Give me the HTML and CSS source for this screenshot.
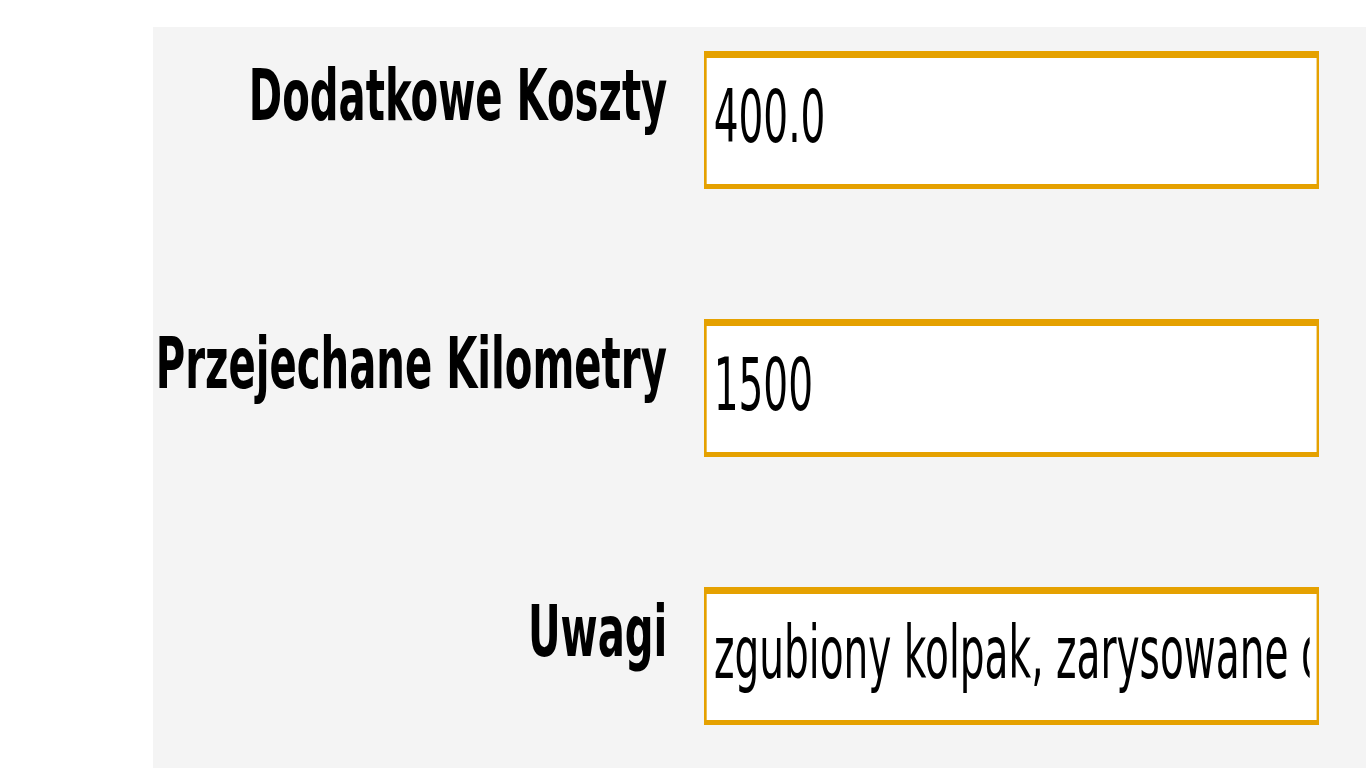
FILE: index.html
```html
<!DOCTYPE html>
<html lang="pl">
<head>
<meta charset="utf-8">
<title>Formularz</title>
<link rel="stylesheet" href="styles.css">
</head>
<body>
<main class="panel">
  <form class="form">
    <label class="label" for="koszty"><span class="label-text">Dodatkowe Koszty</span></label>
    <div class="field"><input class="input" id="koszty" type="text" value="400.0"></div>

    <label class="label" for="km"><span class="label-text">Przejechane Kilometry</span></label>
    <div class="field"><input class="input" id="km" type="text" value="1500"></div>

    <label class="label" for="uwagi"><span class="label-text">Uwagi</span></label>
    <div class="field"><input class="input" id="uwagi" type="text" value="zgubiony kolpak, zarysowane drzwi"></div>
  </form>
</main>
</body>
</html>
```

FILE: styles.css
```css
html, body {
  margin: 0;
  padding: 0;
  background: #ffffff;
  overflow: hidden;
}

.panel {
  margin: 27px 0 0 153px;
  min-height: calc(100vh - 27px);
  background: #f4f4f4;
  padding-top: 24px;
  box-sizing: border-box;
}

.form {
  display: grid;
  grid-template-columns: 514px 615px;
  grid-auto-rows: 138px;
  column-gap: 37px;
  row-gap: 130px;
}

.label {
  display: flex;
  justify-content: flex-end;
  align-items: flex-start;
  margin-top: 3px;
  font-family: "DejaVu Sans", sans-serif;
  font-size: 71px;
  font-weight: bold;
  line-height: normal;
  color: #000000;
  white-space: nowrap;
}

.label-text {
  display: block;
  flex: none;
  transform: scaleX(0.566);
  transform-origin: 100% 50%;
}

.field {
  width: 615px;
  height: 138px;
  overflow: hidden;
}

.input {
  display: block;
  box-sizing: border-box;
  width: 1150px;
  height: 138px;
  margin: 0;
  padding: 0 13px 9px 13px;
  border-style: solid;
  border-color: #e5a100;
  border-width: 7px 5.6px 5px 5.6px;
  border-radius: 0;
  background: #ffffff;
  color: #000000;
  font-family: "DejaVu Sans", sans-serif;
  font-size: 73px;
  outline: none;
  transform: scaleX(0.535);
  transform-origin: 0 0;
}
```
